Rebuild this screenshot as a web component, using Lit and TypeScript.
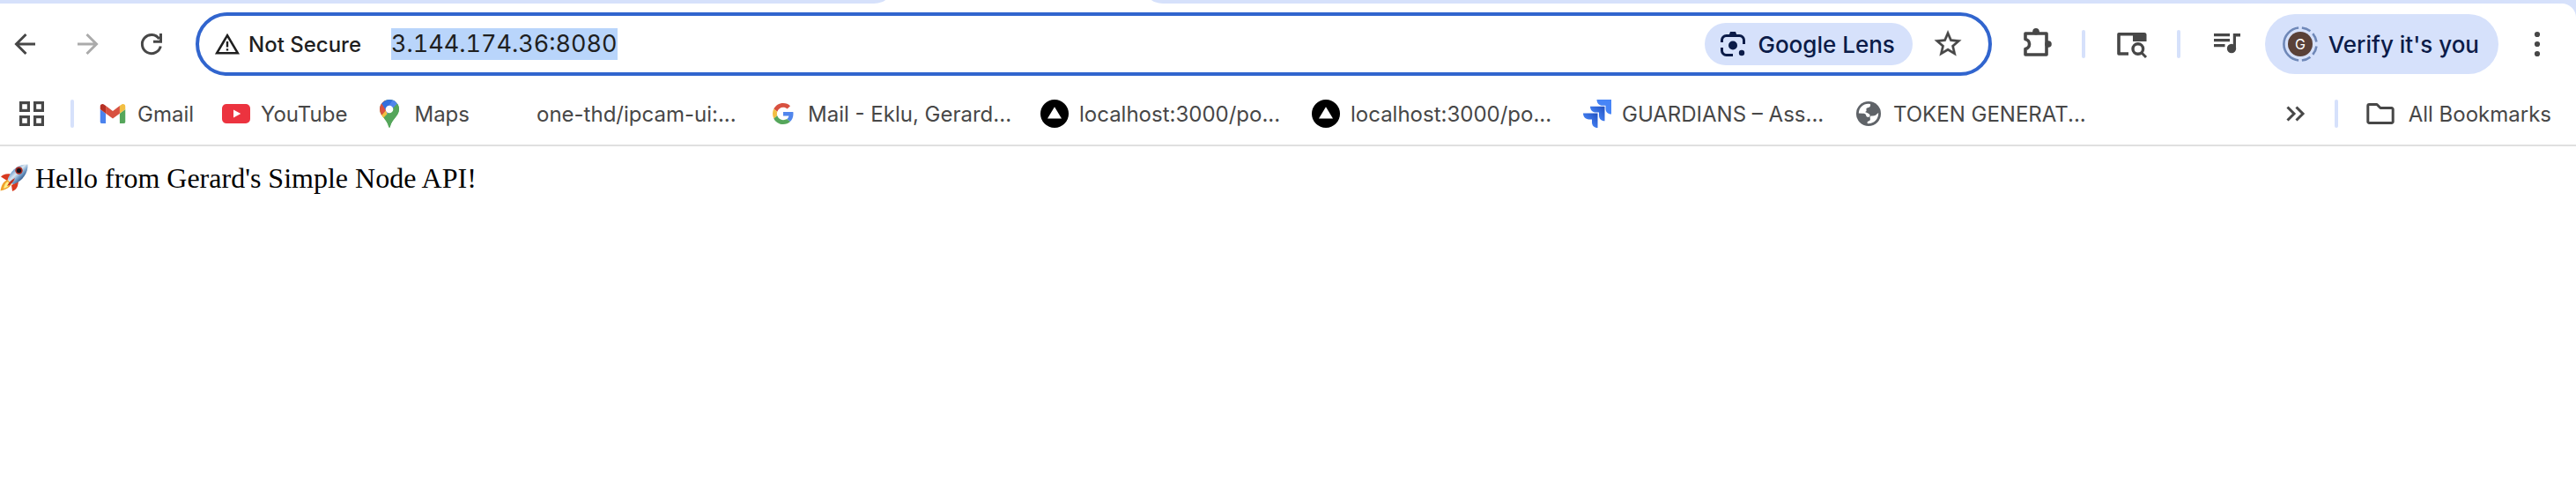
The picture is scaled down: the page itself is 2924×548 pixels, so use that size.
import { LitElement, html, css, svg } from "lit";
import { customElement } from "lit/decorators.js";

const icon = (body: unknown, cls = "") =>
  html`<svg class="icon ${cls}" viewBox="0 0 32 32" aria-hidden="true">${body}</svg>`;

const back = svg`<path class="line" d="M28 16H6M17.500 5L6.500 16l11 11"/>`;
const forward = svg`<path class="line" d="M4 16H26M14.500 5l11 11l-11 11"/>`;
const reload = svg`<path class="line" d="M26.300 18.500A10.600 10.600 0 1 1 24.800 10.200"/><path class="line" d="M26.500 4V13.300H18"/>`;
const warning = svg`<path fill="none" stroke="currentColor" stroke-width="2.600" d="M16 6.200L27.800 26.200H4.200z"/><path fill="currentColor" d="M14.800 13h2.400v6.500h-2.400zM14.800 21.200h2.400v2.400h-2.400z"/>`;
const lens = svg`<g fill="none" stroke="currentColor" stroke-width="3"><path d="M3.500 14V11.500a5 5 0 0 1 5-5h15a5 5 0 0 1 5 5V16M3.500 20v3.500a5 5 0 0 0 5 5H16"/></g><path fill="currentColor" d="M11.500 6l1.500-4h6l1.500 4z"/><circle cx="16" cy="17.500" r="5" fill="currentColor"/><circle cx="26" cy="26" r="3.200" fill="currentColor"/>`;
const star = svg`<g transform="translate(-2.200 -2.600) scale(1.520)"><path fill="currentColor" stroke="currentColor" stroke-width=".2" d="M22 9.240l-7.190-.62L12 2 9.190 8.630 2 9.240l5.460 4.730L5.820 21 12 17.270 18.180 21l-1.630-7.030L22 9.240zM12 15.400l-3.760 2.270 1-4.280-3.320-2.880 4.380-.38L12 6.100l1.710 4.040 4.380.38-3.320 2.880 1 4.280L12 15.400z"/></g>`;
const puzzle = svg`<path class="body" fill="none" stroke="currentColor" stroke-width="3.600" stroke-linejoin="round" d="M4 4H28V28H4V21.500a5.600 5.600 0 0 0 0-11z"/><path fill="currentColor" d="M12.400 3a3.700 3.700 0 0 1 7.400 0zM29 12.200a3.900 3.900 0 0 1 0 7.600z"/><circle cx="16" cy="1.800" r="3.700" fill="currentColor"/><circle cx="30" cy="16" r="3.800" fill="currentColor"/>`;
const pageSearch = svg`<path fill="none" stroke="currentColor" stroke-width="3.600" stroke-linejoin="round" d="M13 27H2V4.800H30"/><path fill="currentColor" d="M18 3h13a2.500 2.500 0 0 1 2.500 2.500V13H18z"/><circle cx="23.800" cy="21.500" r="5.800" fill="none" stroke="currentColor" stroke-width="3.400"/><path class="line" stroke-width="3.600" d="M27.800 25.800l5.200 5.200"/>`;
const music = svg`<path fill="currentColor" d="M2 4h18v3.200H2zM2 10h18v3.200H2zM2 16h12.500v3.200H2zM23.800 4H32v3.600h-5V21h-3.200z"/><circle cx="22" cy="21" r="5.200" fill="currentColor"/>`;
const dots = svg`<g fill="currentColor"><circle cx="16" cy="5" r="3.100"/><circle cx="16" cy="16" r="3.100"/><circle cx="16" cy="27" r="3.100"/></g>`;
const apps = svg`<g fill="none" stroke="currentColor" stroke-width="3.200"><rect x="3.600" y="3.600" width="8.800" height="8.800"/><rect x="19.600" y="3.600" width="8.800" height="8.800"/><rect x="3.600" y="19.600" width="8.800" height="8.800"/><rect x="19.600" y="19.600" width="8.800" height="8.800"/></g>`;
const chevrons = svg`<path class="line" d="M6.500 8.500L14 16l-7.500 7.500M16.500 8.500L24 16l-7.500 7.500"/>`;
const folder = svg`<path fill="none" stroke="currentColor" stroke-width="3" stroke-linejoin="round" d="M1.800 25V7a1.500 1.500 0 0 1 1.500-1.500H12l4 4h12.700a1.500 1.500 0 0 1 1.500 1.500V25a1.500 1.500 0 0 1-1.500 1.500H3.300a1.500 1.500 0 0 1-1.500-1.500z"/>`;

const gmail = svg`<svg x="1.500" y="5" width="29" height="22" viewBox="52 42 88 66"><path fill="#4b83ee" d="M58 108h14V74L52 59v43c0 3.320 2.690 6 6 6"/><path fill="#55a65b" d="M120 108h14c3.320 0 6-2.690 6-6V59l-20 15"/><path fill="#f2be42" d="M120 48v26l20-15v-8c0-7.420-8.470-11.650-14.400-7.200"/><path fill="#d85140" d="M72 74V48l24 18 24-18v26L96 92"/><path fill="#b53024" d="M52 51v8l20 15V48l-5.600-4.200c-5.940-4.450-14.400-.22-14.400 7.200"/></svg>`;
const youtube = svg`<rect y="5" width="32" height="22" rx="5" fill="#ec333f"/><path fill="#fff" d="M13 11.400v9.200l8.300-4.600z"/>`;
const maps = svg`<clipPath id="pin"><path d="M16 0a11 11 0 0 1 11 11c0 4-2.500 7-5.200 10.400C19.300 24.500 17.600 27 16.900 30.600q-.9 2.600-1.800 0C14.400 27 12.700 24.500 10.200 21.400 7.500 18 5 15 5 11A11 11 0 0 1 16 0z"/></clipPath><g clip-path="url(#pin)"><path fill="#55a65b" d="M0 0h32v32H0z"/><path fill="#f2be42" d="M0 24L30-6L22 9L9 25z"/><path fill="#f2be42" d="M3 15L12 8L24 5L9 23z"/><path fill="#d85140" d="M0 0h10l6 8L6 19H0z"/><path fill="#3470de" d="M7 4L16-2L24 2L13 14z"/><path fill="#5186ec" d="M20 0L28 4L25 6L14 17L12 12z"/><path fill="#55a65b" d="M25 4.500L32 6V32H16L8 22z"/></g><circle cx="16" cy="11" r="4.300" fill="#fff"/>`;
const google = svg`<svg x="4" y="4" width="24" height="24" viewBox="0 0 48 48"><path fill="#d85140" d="M24 9.500c3.540 0 6.710 1.220 9.210 3.600l6.850-6.850C35.900 2.380 30.470 0 24 0 14.620 0 6.510 5.380 2.560 13.220l7.980 6.190C12.430 13.720 17.740 9.500 24 9.500z"/><path fill="#5186ec" d="M46.980 24.550c0-1.570-.15-3.090-.38-4.550H24v9.020h12.940c-.58 2.960-2.260 5.480-4.780 7.180l7.730 6c4.510-4.180 7.090-10.360 7.090-17.650z"/><path fill="#f2be42" d="M10.530 28.590A14.500 14.500 0 0 1 9.770 24c0-1.600.27-3.140.76-4.590l-7.980-6.190A23.900 23.900 0 0 0 0 24c0 3.880.92 7.540 2.560 10.780z"/><path fill="#55a65b" d="M24 48c6.480 0 11.930-2.130 15.890-5.810l-7.730-6c-2.150 1.450-4.920 2.300-8.160 2.300-6.260 0-11.570-4.220-13.470-9.910l-7.980 6.190C6.510 42.620 14.620 48 24 48z"/></svg>`;
const vercel = svg`<circle cx="16" cy="16" r="16" fill="#000"/><path fill="#fff" d="M16 8.200l8 13.400H8z"/>`;
const jira = svg`<linearGradient id="fold" x1="1" y1="0" x2=".3" y2=".7"><stop offset=".1" stop-color="#2454c4"/><stop offset="1" stop-color="#4785f7"/></linearGradient><path fill="#4785f7" d="M15.500 0H32v16.500c-4 0-6.500-2.600-6.500-6V6.800h-3.600c-3.600 0-6.400-2.800-6.400-6.800z"/><path fill="url(#fold)" d="M8 7.800h16.500v16.400c-4 0-6.500-2.600-6.500-6v-3.600h-3.600C10.800 14.600 8 11.800 8 7.800z"/><path fill="url(#fold)" d="M0 15.600h16.500V32c-4 0-6.500-2.600-6.500-6v-3.600H6.400C2.800 22.400 0 19.600 0 15.600z"/>`;
const globe = svg`<circle cx="16" cy="16" r="14" fill="#5f6368"/><path fill="#fff" d="M4.800 15.500C5 9 10 4.700 15.500 4.700l2.500.3c.5 2.500-.5 3.800-3 4.200-1.800.4-1.800 1.400-1.400 2.600.3 1.200-.5 2-1.800 2.200 1.500.8 4.600 1.200 5.600 3.200.8 1.600-.4 2.600-1.900 2.600-1.600 0-2.200-1-2.600-2.600-.4-1-1.500-1.500-3-1.500zM27.200 15c.3 7-5 12.300-11.600 12.300-1.300-.1-1.400-1.500-.6-2.300.9-.8 2.300-.6 2.800-1.900.4-1.200-.4-2.200-.1-3.300.6-1.700 2-1.200 3.300-1.300 1.700 0 3.200-.4 4-1.700z"/>`;
const blank = svg``;

const rocket = html`<svg class="rocket" viewBox="0 0 32 32" role="img" aria-label="Rocket">
  <defs>
    <linearGradient id="hull" x1=".25" y1=".25" x2=".75" y2=".75"><stop offset="0" stop-color="#5d93c9"/><stop offset=".4" stop-color="#dbe6ef"/><stop offset=".65" stop-color="#7da6cf"/><stop offset="1" stop-color="#2a5488"/></linearGradient>
  </defs>
  <path fill="#d8391f" d="M1 14.500c2-2.500 6-4 11-3l-4 7.500zM21 20l-1 5c-1 3-3 5-6 6l-1-7z"/>
  <path fill="#f0a22a" d="M9 18c-4 1-7 4-8.500 12.500 5-1 10-3 12.500-7.500z"/>
  <path fill="#fdf08a" d="M9 20c-3 1-4 4-5 8 4-1 6-3 7-5z"/>
  <path fill="url(#hull)" d="M31.500.5C24 0 14 4 9 16.500c-.6 1.800 4.500 6.900 6.500 6.500C26 19 32 10 31.500.5z"/>
  <circle cx="21.500" cy="7.500" r="4.200" fill="#a52a22"/><circle cx="21.500" cy="7.500" r="2.600" fill="#14141c"/>
  <path fill="#c4311e" d="M8 25c2-4 5-7 9-9-2 5-5 8-9 9z"/>
</svg>`;

interface Bookmark { label: string; glyph: unknown; wide?: boolean }

const bookmarks: Bookmark[] = [
  { label: "Gmail", glyph: gmail },
  { label: "YouTube", glyph: youtube },
  { label: "Maps", glyph: maps },
  { label: "one-thd/ipcam-ui:...", glyph: blank, wide: true },
  { label: "Mail - Eklu, Gerard...", glyph: google, wide: true },
  { label: "localhost:3000/po...", glyph: vercel, wide: true },
  { label: "localhost:3000/po...", glyph: vercel, wide: true },
  { label: "GUARDIANS – Ass...", glyph: jira, wide: true },
  { label: "TOKEN GENERAT...", glyph: globe, wide: true },
];

const shared = css`
  :host { display: block; font-family: Inter, "Liberation Sans", sans-serif; }
  * { box-sizing: border-box; }
  button, a, input { font: inherit; color: inherit; text-decoration: none; }
  button { display: flex; align-items: center; flex: none; border: 0; padding: 0; background: none; white-space: nowrap; }
  .icon { display: block; flex: none; width: 32px; height: 32px; overflow: visible; }
  .line { fill: none; stroke: currentColor; stroke-width: 3; }
  .divider { flex: none; width: 4px; height: 32px; border-radius: 2px; background: #d6e1fb; }
`;

@customElement("browser-toolbar")
class BrowserToolbar extends LitElement {
  static styles = [shared, css`
    :host { background: #d6e1fb; }
    .bar { display: flex; align-items: center; height: 92px; padding: 0 28px 0 12px; background: #fff; border-top-right-radius: 16px; color: #474747; }
    .nav { display: flex; gap: 40px; margin-right: 34px; }
    .faded { color: #ababab; }
    .omnibox { display: flex; align-items: center; flex: 1; min-width: 0; height: 72px; padding: 0 30px 0 16px; border: 4px solid #3165ce; border-radius: 36px; }
    .site { gap: 8px; width: 202px; color: #1f1f1f; font-size: 24px; font-weight: 500; }
    .url { flex: 1; min-width: 0; height: 36px; padding: 0; border: 0; outline: 0; background: none; color: #1f1f1f; font-size: 27px; line-height: 36px; font-variant-numeric: tabular-nums; }
    .url::selection { background: #b9d5fb; color: #1f1f1f; }
    .lens { gap: 12px; height: 48px; margin-right: 24px; padding: 0 20px 0 16px; border-radius: 24px; background: #d6e1fb; color: #0b1b48; font-size: 26px; font-weight: 500; }
    .tools { display: flex; align-items: center; gap: 28px; margin-left: 34px; }
    .tools .divider { margin: 0 8px; }
    .profile { gap: 12px; height: 68px; padding: 0 22px 0 20px; border-radius: 34px; background: #d6e1fb; color: #0b1b48; font-size: 26px; font-weight: 500; }
    .avatar { width: 40px; height: 40px; }
    .initial { font-size: 16px; fill: #fff; text-anchor: middle; font-weight: 400; }
  `];

  firstUpdated() {
    const url = this.renderRoot.querySelector<HTMLInputElement>(".url");
    url?.focus();
    url?.select();
  }

  render() {
    return html`<div class="bar">
      <nav class="nav">
        <button aria-label="Back">${icon(back)}</button>
        <button class="faded" aria-label="Forward">${icon(forward)}</button>
        <button aria-label="Reload">${icon(reload)}</button>
      </nav>
      <div class="omnibox">
        <button class="site">${icon(warning)}<span>Not Secure</span></button>
        <input class="url" aria-label="Address" spellcheck="false" value="3.144.174.36:8080">
        <button class="lens">${icon(lens)}<span>Google Lens</span></button>
        <button aria-label="Bookmark this tab">${icon(star)}</button>
      </div>
      <div class="tools">
        <button aria-label="Extensions">${icon(puzzle)}</button>
        <span class="divider"></span>
        <button aria-label="Search side panel">${icon(pageSearch)}</button>
        <span class="divider"></span>
        <button aria-label="Media controls">${icon(music)}</button>
        <button class="profile">
          <svg class="avatar" viewBox="0 0 40 40" aria-hidden="true">
            <circle cx="20" cy="20" r="18.600" fill="none" stroke="#6f88b8" stroke-width="2.600" pathLength="360" stroke-dasharray="0 6 32 12 32 16 32 12 32 12 168 6" transform="rotate(-90 20 20)"/>
            <circle cx="20" cy="20" r="14" fill="#5a4138"/>
            <text class="initial" x="20" y="26">G</text>
          </svg>
          <span>Verify it's you</span>
        </button>
        <button aria-label="Menu">${icon(dots)}</button>
      </div>
    </div>`;
  }
}

@customElement("bookmarks-bar")
class BookmarksBar extends LitElement {
  static styles = [shared, css`
    .bar { display: flex; align-items: center; gap: 28px; height: 70px; padding: 0 28px 2px 20px; border-bottom: 2px solid #e0e0e0; background: #fff; color: #474747; font-size: 24px; }
    .list { display: flex; flex: 1; gap: 32px; min-width: 0; overflow: hidden; margin: 0; padding: 0; list-style: none; }
    .item { display: flex; align-items: center; gap: 12px; white-space: nowrap; }
    .wide { width: 276px; }
    .all { gap: 16px; margin-left: 4px; }
  `];

  render() {
    return html`<nav class="bar">
      <button aria-label="Apps">${icon(apps)}</button>
      <span class="divider"></span>
      <ul class="list">
        ${bookmarks.map((b) => html`<li><a class="item ${b.wide ? "wide" : ""}" href="#">${icon(b.glyph)}<span>${b.label}</span></a></li>`)}
      </ul>
      <button aria-label="More bookmarks">${icon(chevrons)}</button>
      <span class="divider"></span>
      <button class="all">${icon(folder)}<span>All Bookmarks</span></button>
    </nav>`;
  }
}

@customElement("app-root")
class AppRoot extends LitElement {
  static styles = css`
    :host { display: block; min-height: 100vh; background: #fff; }
    .tabs { display: flex; align-items: flex-end; gap: 280px; height: 4px; overflow: hidden; }
    .before, .after { flex: none; height: 24px; background: #d6e1fb; }
    .before { width: 1016px; border-bottom-right-radius: 24px; }
    .after { flex: 1; border-bottom-left-radius: 24px; }
    .page { display: flex; align-items: center; gap: 8px; padding-top: 18px; color: #000; font: 32px/36px "Liberation Serif", "Times New Roman", serif; }
    .rocket { flex: none; width: 32px; height: 32px; }
  `;

  render() {
    return html`
      <div class="tabs"><div class="before"></div><div class="after"></div></div>
      <browser-toolbar></browser-toolbar>
      <bookmarks-bar></bookmarks-bar>
      <main class="page">${rocket}<span>Hello from Gerard's Simple Node API!</span></main>
    `;
  }
}
